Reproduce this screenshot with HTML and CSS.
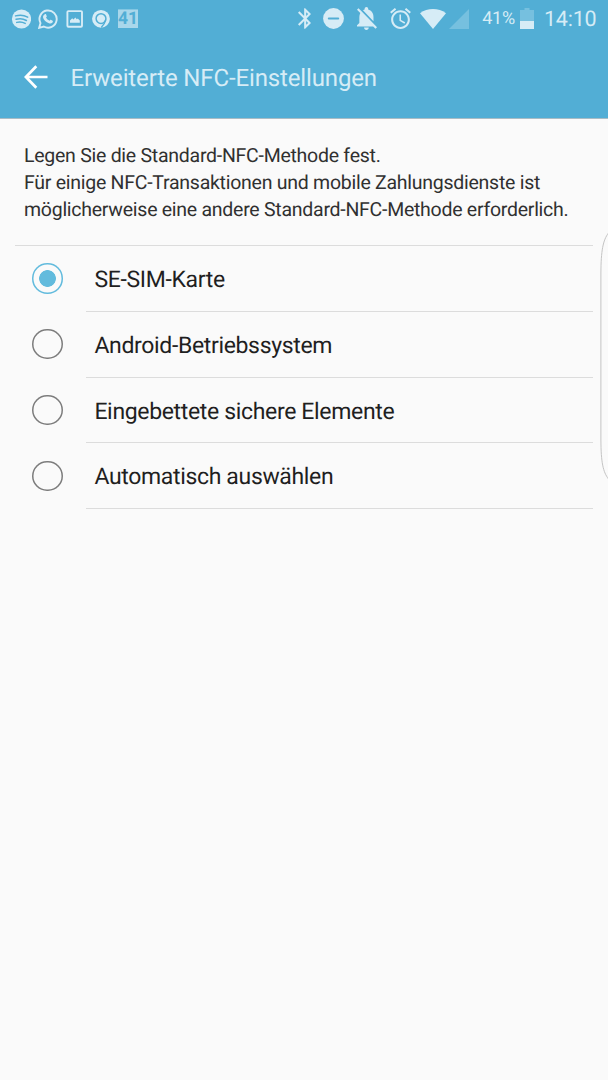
FILE: index.html
```html
<!DOCTYPE html>
<html lang="de">
<head>
  <meta charset="UTF-8">
  <title>Erweiterte NFC-Einstellungen</title>
  <meta name="viewport" content="width=device-width, initial-scale=1.0">
  <link rel="stylesheet" href="styles.css">
</head>
<body>
  <header>
    <div class="status-bar">
      <div class="notifications">
        <svg width="20" height="20" viewBox="0 0 20 20">
          <circle cx="10.5" cy="10" r="9.6" fill="currentColor"/>
          <path class="cut" d="M4.5 6.9c4-1.2 8.6-.8 12.2 1.2M5.1 10.3c3.5-1 7.3-.6 10.3 1.2M5.7 13.4c3-.8 6-.4 8.5 1" stroke-width="1.5"/>
        </svg>
        <svg width="20" height="20" viewBox="0 0 20 20">
          <path d="M1.2 18.8l1.3-4.7A8.6 8.6 0 1 1 5.8 17.5z" fill="none" stroke="currentColor" stroke-width="1.9"/>
          <path d="M6.8 5.3c.5-.4 1.1-.3 1.3.2l.7 1.7c.1.5-.5 1-.8 1.4.8 1.5 1.9 2.5 3.5 3.2.4-.4.8-1.2 1.3-1l1.8.9c.5.3.3 1.2-.1 1.7-.9 1-2.2 1.2-3.5.8-3-1-5.2-3.2-5.9-5.5-.3-1.3.3-2.5 1.7-3.4z" fill="currentColor"/>
        </svg>
        <svg width="18" height="18" viewBox="0 0 18 18">
          <rect x="1.4" y="1.1" width="14.6" height="15.6" rx="1" fill="none" stroke="currentColor" stroke-width="1.9"/>
          <path d="M4 12.7v-2.200L6.200 8.200l1.300 1.300L9.300 7.400l1.500 1.900 1-.9 2 2.100v2.200z" fill="currentColor"/>
        </svg>
        <svg width="18" height="20" viewBox="0 0 18 20">
          <circle cx="9" cy="9.8" r="8.9" fill="currentColor"/>
          <circle class="cut" cx="9" cy="9.6" r="4.9" stroke-width="1.5"/>
          <path class="cut" d="M13.7 10.800C13 13.800 11.600 16 9.600 18" stroke-width="1.300"/>
        </svg>
        <div class="calendar">41</div>
      </div>
      <div class="system">
        <svg class="bluetooth" width="13" height="21" viewBox="5 2 12.71 20" fill="currentColor">
          <path d="M17.71 7.71L12 2h-1v7.59L6.41 5 5 6.41 10.59 12 5 17.59 6.41 19 11 14.41V22h1l5.71-5.71-4.3-4.29 4.3-4.29zM13 5.83l1.88 1.88L13 9.59V5.83zm1.88 10.46L13 18.17v-3.76l1.88 1.88z"/>
        </svg>
        <svg class="dnd" width="21" height="21" viewBox="0 0 21 21">
          <circle cx="10.5" cy="10.5" r="10.4" fill="currentColor"/>
          <path class="cut" d="M5.8 10.5h9.4" stroke-width="2"/>
        </svg>
        <svg class="bell" width="20" height="23" viewBox="4 2.5 17 19.5" fill="currentColor">
          <path d="M20 18.69L7.84 6.14 5.27 3.49 4 4.76l2.8 2.8v.01c-.52.99-.8 2.16-.8 3.42v5l-2 2v1h13.73l2 2L21 19.72l-1-1.03zM12 22c1.11 0 2-.89 2-2h-4c0 1.11.89 2 2 2zm6-7.32V11c0-3.08-1.64-5.64-4.5-6.32V4c0-.83-.67-1.5-1.5-1.5s-1.5.67-1.5 1.5v.68c-.39.08-.75.22-1.43.55L18 14.68z"/>
        </svg>
        <svg class="alarm" width="21" height="21" viewBox="2 1.86 20 20.14" fill="currentColor">
          <path d="M22 5.72l-4.6-3.86-1.29 1.53 4.6 3.86L22 5.72zM7.88 3.39L6.6 1.86 2 5.71l1.29 1.53 4.59-3.85zM12.5 8H11v6l4.75 2.85.75-1.23-4-2.37V8zM12 4c-4.97 0-9 4.03-9 9s4.02 9 9 9c4.97 0 9-4.03 9-9s-4.03-9-9-9zm0 16c-3.87 0-7-3.13-7-7s3.13-7 7-7 7 3.13 7 7-3.13 7-7 7z"/>
        </svg>
        <svg class="wifi" width="26" height="20" viewBox="0 0 26 20">
          <path d="M13 20L0 4.2C7.5-1.4 18.5-1.4 26 4.2z" fill="currentColor"/>
        </svg>
        <svg class="signal" width="20" height="20" viewBox="0 0 20 20">
          <path class="dim" d="M20 0v20H0z"/>
        </svg>
        <span class="percent">41%</span>
        <svg class="battery" width="14" height="21" viewBox="0 0 14 21">
          <path class="dim" d="M4.5 0h5v2H14v11H0V2h4.5z"/>
          <path d="M0 13h14v8H0z" fill="currentColor"/>
        </svg>
        <span class="clock">14:10</span>
      </div>
    </div>
    <div class="app-bar">
      <svg class="back" width="24" height="24" viewBox="0 0 24 24">
        <path d="M12.3 1.2L1.9 12l10.4 10.8M2 12h21.5"/>
      </svg>
      <h1>Erweiterte NFC-Einstellungen</h1>
    </div>
  </header>

  <main>
    <p class="intro">Legen Sie die Standard-NFC-Methode fest.<br>Für einige NFC-Transaktionen und mobile Zahlungsdienste ist<br>möglicherweise eine andere Standard-NFC-Methode erforderlich.</p>
    <div class="options">
      <label><input type="radio" name="nfc" checked><span>SE-SIM-Karte</span></label>
      <label><input type="radio" name="nfc"><span>Android-Betriebssystem</span></label>
      <label><input type="radio" name="nfc"><span>Eingebettete sichere Elemente</span></label>
      <label><input type="radio" name="nfc"><span>Automatisch auswählen</span></label>
    </div>
  </main>

  <!-- edge panel handle -->
  <svg class="edge-handle" width="8" height="250" viewBox="0 0 8 250" fill="none">
    <path d="M8.5 2C3 9 1 20 .9 42V209c.1 22 2.1 32 7.6 39"/>
  </svg>
</body>
</html>
```
FILE: styles.css
```css
* { box-sizing: border-box; }
body {
  margin: 0;
  min-height: 1080px;
  position: relative;
  overflow: hidden;
  font-family: Roboto, sans-serif;
  text-rendering: geometricPrecision;
  background: #fafafa;
  color: #1f1f1f;
}
svg {
  display: block;
  flex-shrink: 0;
}
header {
  height: 119px;
  background: #52aed5;
  border-bottom: 1px solid #a9bcc5;
}
.status-bar {
  display: flex;
  justify-content: space-between;
  height: 37px;
  padding: 0 11.5px 0 11px;
  color: #d6ecf6;
}
.notifications,
.system {
  display: flex;
  align-items: center;
}
.notifications { gap: 8px; }
.notifications svg:nth-child(2) { margin-left: -1px; }
.cut {
  fill: none;
  stroke: #52aed5;
  stroke-linecap: round;
}
.dim { fill: #76c0df; }
.calendar {
  width: 20px;
  height: 19px;
  background: #a9d7eb;
  border-top: 1px solid #82c6e2;
  color: #52aed5;
  font-size: 17.5px;
  font-weight: bold;
  line-height: 18px;
  text-align: center;
}
.dnd { margin-left: 12px; }
.bell { margin-left: 13px; }
.alarm { margin-left: 13px; }
.wifi { margin-left: 9px; }
.signal { margin-left: 3px; }
.percent {
  margin-left: 13px;
  padding-top: 1px;
  font-size: 18px;
  line-height: 20px;
  letter-spacing: -0.2px;
}
.battery { margin-left: 5px; }
.clock {
  margin-left: 10px;
  padding-top: 2px;
  font-size: 21.5px;
  line-height: 24px;
  letter-spacing: -0.2px;
}
.app-bar {
  display: flex;
  align-items: center;
  height: 81px;
  padding-left: 23.5px;
}
.back {
  margin-bottom: 1px;
  fill: none;
  stroke: #fff;
  stroke-width: 2.7;
}
h1 {
  margin: 0 0 0 23px;
  color: #d6ecf6;
  font-size: 24px;
  font-weight: normal;
  line-height: 28px;
  letter-spacing: -0.14px;
}
.intro {
  margin: 0 15px;
  padding: 23px 0 22px 9px;
  border-bottom: 1px solid #dcdcdc;
  font-size: 19.5px;
  line-height: 27px;
  letter-spacing: -0.26px;
  color: #303030;
  white-space: nowrap;
}
.options label {
  display: flex;
  height: 65.8px;
  padding: 0 15px 0 32px;
  font-size: 23px;
  letter-spacing: -0.34px;
}
.options input {
  appearance: none;
  flex-shrink: 0;
  width: 30.5px;
  height: 30.5px;
  margin: 17.2px 23.5px 0 0;
  border-radius: 50%;
  box-shadow: inset 0 0 0 1.5px #7c7c7c;
}
.options input:checked {
  background: radial-gradient(circle, #62bbdd 8px, transparent 8.7px);
  box-shadow: inset 0 0 0 1.5px #62bbdd;
}
.options span {
  flex: 1;
  padding-left: 8.4px;
  border-bottom: 1px solid #dcdcdc;
  line-height: 67px;
}
.edge-handle {
  position: absolute;
  top: 231px;
  right: 0;
  stroke: #c4c4c4;
}
```
